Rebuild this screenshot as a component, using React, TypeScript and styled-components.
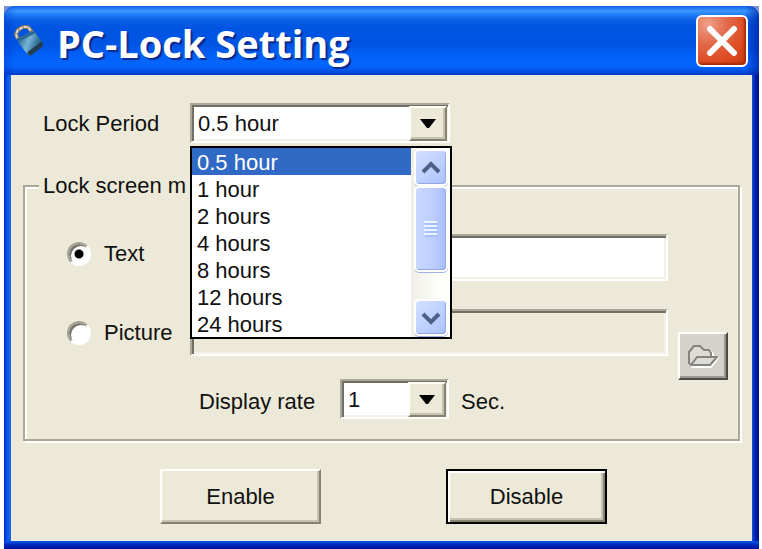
import React, { useState } from 'react';
import styled, { createGlobalStyle, css } from 'styled-components';

const face = '#ece9d8';
const shade = '#aca899';
const dark = '#716f64';

const GlobalStyle = createGlobalStyle`
  * { box-sizing: border-box; }
  body {
    margin: 0;
    background: #fff;
    color: #111;
    font: 22px/27px "Liberation Sans", Arial, sans-serif;
  }
  button, input, select { font: inherit; color: inherit; }
`;

const Page = styled.main`
  min-height: 100vh;
  padding: 6px 3px 0 4px;
  display: flex;
`;

const Frame = styled.div`
  flex: 1;
  display: flex;
  background: #7d8fd6;
`;

const Window = styled.section`
  flex: 1;
  display: flex;
  flex-direction: column;
  border-radius: 11px 11px 0 0;
  overflow: hidden;
  padding: 0 7px 8px;
  background:
    linear-gradient(#0a56ea, #0028b8 50%, #00129a) bottom / 100% 8px no-repeat,
    linear-gradient(90deg, #0028c8, #0855e6 40%, #1466f0) left / 7px 100% no-repeat,
    linear-gradient(90deg, #1a55dd, #0020a8 45%, #00128c) right / 7px 100% no-repeat;
`;

const TitleBar = styled.header`
  height: 69px;
  margin: 0 -7px;
  padding: 0 11px 0 10px;
  display: flex;
  align-items: center;
  gap: 12px;
  background:
    linear-gradient(90deg, #0030c060, #0030c000 12px, #0030c000 calc(100% - 14px), #0020a0b0),
    linear-gradient(#0c5fe6, #3d97ff 5px, #2482fa 8px, #0a5fe6 14px, #0054e2 22px, #0054e3 38px,
      #0263fb 52px, #0566ff 59px, #045cf0 63px, #0140ce 68px, #0140ce);
`;

const Title = styled.h1`
  flex: 1;
  margin: 0;
  padding-top: 4px;
  color: #fff;
  font: bold 38px/50px "Open Sans", "Noto Sans", sans-serif;
  text-shadow: 2px 2px 1px #0a2a8c;
`;

const CloseButton = styled.button`
  width: 52px;
  height: 52px;
  padding: 0;
  display: grid;
  place-items: center;
  border: 2px solid #fff;
  border-radius: 6px;
  background: radial-gradient(circle at 20% 15%, #f0a08a, #e2694a 35%, #dd4a20 70%, #c23a12);
  box-shadow: inset -2px -2px 2px #a82c0a;
`;

const Body = styled.form`
  flex: 1;
  padding: 28px 12px 17px;
  display: flex;
  flex-direction: column;
  background: ${face};
`;

const PeriodRow = styled.div`
  display: grid;
  grid-template-columns: 147px 260px;
  padding-left: 20px;
  align-items: center;
`;

const sunken = css`
  border: 2px solid;
  border-color: ${shade} #fff #fff ${shade};
  box-shadow: inset 2px 2px 0 ${dark}, inset -2px -2px 0 #f4f2e8;
`;

const raised = css`
  border: 2px solid;
  border-color: #fffef8 #85836f #85836f #fffef8;
  box-shadow: inset -2px -2px 0 #c5c2b2;
`;

const ComboBox = styled.div<{ $width: number }>`
  position: relative;
  width: ${(p) => p.$width}px;
  height: 40px;
`;

const Select = styled.select`
  appearance: none;
  ${sunken}
  width: 100%;
  height: 100%;
  padding: 0 44px 0 6px;
  border-radius: 0;
  background: #fff;
  outline: none;
`;

const DropArrow = styled.span`
  position: absolute;
  top: 3px;
  right: 3px;
  bottom: 2px;
  width: 38px;
  display: grid;
  place-items: center;
  ${raised}
  background: ${face};
  pointer-events: none;
`;

const Popup = styled.div`
  position: absolute;
  z-index: 2;
  top: 43px;
  left: 0;
  width: 262px;
  display: flex;
  border: 2px solid #000;
  background: #fff;
`;

const Options = styled.ul`
  flex: 1;
  margin: 0;
  padding: 0;
  list-style: none;
`;

const Option = styled.li<{ $active: boolean }>`
  height: 27px;
  padding: 1px 0 0 5px;
  color: ${(p) => (p.$active ? '#fff' : '#111')};
  background: ${(p) => (p.$active ? '#316ac5' : '#fff')};
`;

const ScrollBar = styled.div`
  width: 39px;
  padding: 1px 2px 1px 3px;
  display: flex;
  flex-direction: column;
  background: linear-gradient(90deg, #efede5, #fefefb 70%);
`;

const ScrollPart = styled.button`
  height: 37px;
  padding: 0;
  display: grid;
  place-items: center;
  border: 2px solid #fff;
  border-radius: 5px;
  background: linear-gradient(135deg, #d2dfff, #bccfff 60%, #a9c0f8);
  box-shadow: inset -1px -1px 1px #8fa8e4, 0 1px 0 #9db4e6;
`;

const Thumb = styled(ScrollPart)`
  height: 86px;
  background: linear-gradient(90deg, #cbd9ff, #bccdff 60%, #a8bdf8);
`;

const Track = styled.div`
  flex: 1;
`;

const Group = styled.fieldset`
  min-width: 0;
  margin: 29px 0 0;
  padding: 35px 10px 20px 42px;
  display: grid;
  grid-template-columns: 1fr 50px;
  column-gap: 10px;
  border: 2px solid ${shade};
  box-shadow: 2px 2px 0 #fff, inset 2px 2px 0 #fff;
`;

const Legend = styled.legend`
  margin-left: -28px;
  padding: 1px 5px 0 4px;
  line-height: 26px;
  background: ${face};
`;

const Rows = styled.div`
  display: grid;
  grid-template-columns: 123px 1fr;
  row-gap: 28px;
`;

const Choice = styled.label<{ $raised?: boolean }>`
  height: ${(p) => (p.$raised ? 39 : 47)}px;
  display: flex;
  align-items: center;
  gap: 13px;
`;

const Radio = styled.input`
  appearance: none;
  width: 24px;
  height: 24px;
  margin: 0;
  border: 2px solid;
  border-color: #a5a294 #fff #fff #a5a294;
  border-radius: 50%;
  background: #fff;
  box-shadow: inset 2px 2px 0 #77756a;
  &:checked {
    background: radial-gradient(circle, #000 4px, #fff 5px);
  }
`;

const TextField = styled.input`
  ${sunken}
  width: 100%;
  height: 47px;
  padding: 0 8px;
  background: #fff;
  outline: none;
  &:disabled { background: ${face}; }
`;

const RateRow = styled.div`
  grid-column: 2;
  margin-top: -5px;
  padding-left: 9px;
  display: flex;
  align-items: center;
`;

const RateLabel = styled.label`
  width: 141px;
  padding-top: 4px;
  white-space: nowrap;
`;

const Unit = styled.span`
  padding: 4px 0 0 12px;
`;

const BrowseColumn = styled.div`
  padding-top: 98px;
`;

const BrowseButton = styled.button`
  width: 50px;
  height: 48px;
  padding: 0;
  display: grid;
  place-items: center;
  border: 2px solid;
  border-color: #fffef8 #4d4b46 #4d4b46 #fffef8;
  background: #d4d2cb;
  box-shadow: inset -2px -2px 0 #9b9993;
`;

const Actions = styled.div`
  display: flex;
  justify-content: center;
  gap: 125px;
  padding: 28px 0 0 4px;
`;

const ActionButton = styled.button<{ $primary?: boolean }>`
  width: 161px;
  height: 55px;
  padding: 0;
  ${raised}
  background: ${face};
  ${(p) =>
    p.$primary &&
    css`
      border-color: #000;
      box-shadow: inset 2px 2px 0 #fff, inset -2px -2px 0 #85836f, inset -4px -4px 0 #c5c2b2;
    `}
`;

const LockIcon = () => (
  <svg width="31" height="34" viewBox="0 0 31 34" aria-hidden="true">
    <defs>
      <linearGradient id="lock" x1="0" y1="0.3" x2="1" y2="0.7">
        <stop offset="0" stopColor="#24648c" />
        <stop offset="0.4" stopColor="#78b4d6" />
        <stop offset="0.65" stopColor="#3f80a8" />
        <stop offset="1" stopColor="#15415f" />
      </linearGradient>
    </defs>
    <path d="M4 15 2 10 4 6 9 3 14 3 18 8" fill="none" stroke="#7d7465" strokeWidth="4" />
    <path d="M3 14 2 10 4 6 9 3 14 3 17 7" fill="none" stroke="#ddd8ca" strokeWidth="2" strokeDasharray="4 1" />
    <path d="M4 14 20 7 29 19 28 23 16 32 13 30 4 18Z" fill="url(#lock)" />
    <path d="M4 14 20 7 22 9 6 17Z" fill="#2b6a92" />
    <path d="m13 29 3 3 12-9 1-4-2-1-12 9Z" fill="#223c50" />
  </svg>
);

const ArrowIcon = () => (
  <svg width="16" height="9" viewBox="0 0 16 9" aria-hidden="true">
    <path d="M0 0h16L9 9H7Z" fill="#000" />
  </svg>
);

const Chevron = ({ down = false }: { down?: boolean }) => (
  <svg width="20" height="14" viewBox="0 0 20 14" aria-hidden="true">
    <path d={down ? 'M2 3l8 8 8-8' : 'M2 11l8-8 8 8'} fill="none" stroke="#4d6185" strokeWidth="4" />
  </svg>
);

const GripIcon = () => (
  <svg width="15" height="17" viewBox="0 0 15 17" aria-hidden="true">
    <path d="M0 1h13M0 5h13M0 9h13M0 13h13" stroke="#eef4ff" strokeWidth="2" />
    <path d="M1 3h13M1 7h13M1 11h13M1 15h13" stroke="#8cb0f8" strokeWidth="1" />
  </svg>
);

const FolderIcon = () => (
  <svg width="32" height="24" viewBox="0 0 32 24" fill="none" strokeLinejoin="round" aria-hidden="true">
    <path d="M5 22 2 19V8l5-6h6l4 4h5l3 3v4h5l-7 9Z" stroke="#fff" strokeWidth="2" transform="translate(1 1)" />
    <path d="M4 21 2 19V8l5-6h6l4 4h5l2 3v4M4 21l6-8h20l-7 8Z" fill="#dddcd7" stroke="#85837d" strokeWidth="2" />
  </svg>
);

const periods = ['0.5 hour', '1 hour', '2 hours', '4 hours', '8 hours', '12 hours', '24 hours'];

export default function App() {
  const [period, setPeriod] = useState(periods[0]);
  const [mode, setMode] = useState('text');

  return (
    <>
      <GlobalStyle />
      <Page>
        <Frame>
          <Window aria-labelledby="title">
            <TitleBar>
              <LockIcon />
              <Title id="title">PC-Lock Setting</Title>
              <CloseButton type="button" aria-label="Close">
                <svg width="32" height="32" viewBox="0 0 32 32" aria-hidden="true">
                  <path d="M4 4l24 24M28 4 4 28" stroke="#fff" strokeWidth="6" strokeLinecap="round" />
                </svg>
              </CloseButton>
            </TitleBar>
            <Body onSubmit={(e) => e.preventDefault()}>
              <PeriodRow>
                <label htmlFor="period">Lock Period</label>
                <ComboBox $width={260}>
                  <Select id="period" value={period} onChange={(e) => setPeriod(e.target.value)}>
                    {periods.map((p) => (
                      <option key={p}>{p}</option>
                    ))}
                  </Select>
                  <DropArrow><ArrowIcon /></DropArrow>
                  <Popup>
                    <Options role="listbox" aria-label="Lock Period">
                      {periods.map((p) => (
                        <Option
                          key={p}
                          role="option"
                          aria-selected={p === period}
                          $active={p === period}
                          onClick={() => setPeriod(p)}
                        >
                          {p}
                        </Option>
                      ))}
                    </Options>
                    <ScrollBar>
                      <ScrollPart type="button" aria-label="Scroll up"><Chevron /></ScrollPart>
                      <Thumb type="button" aria-label="Scroll position"><GripIcon /></Thumb>
                      <Track />
                      <ScrollPart type="button" aria-label="Scroll down"><Chevron down /></ScrollPart>
                    </ScrollBar>
                  </Popup>
                </ComboBox>
              </PeriodRow>
              <Group>
                <Legend>Lock screen m</Legend>
                <Rows>
                  <Choice $raised>
                    <Radio type="radio" name="mode" checked={mode === 'text'} onChange={() => setMode('text')} />
                    Text
                  </Choice>
                  <TextField type="text" aria-label="Text" />
                  <Choice>
                    <Radio type="radio" name="mode" checked={mode === 'picture'} onChange={() => setMode('picture')} />
                    Picture
                  </Choice>
                  <TextField type="text" aria-label="Picture" disabled={mode !== 'picture'} />
                  <RateRow>
                    <RateLabel htmlFor="rate">Display rate</RateLabel>
                    <ComboBox $width={109}>
                      <Select id="rate" defaultValue="1">
                        <option>1</option>
                      </Select>
                      <DropArrow><ArrowIcon /></DropArrow>
                    </ComboBox>
                    <Unit>Sec.</Unit>
                  </RateRow>
                </Rows>
                <BrowseColumn>
                  <BrowseButton type="button" aria-label="Browse"><FolderIcon /></BrowseButton>
                </BrowseColumn>
              </Group>
              <Actions>
                <ActionButton type="button">Enable</ActionButton>
                <ActionButton type="submit" $primary>Disable</ActionButton>
              </Actions>
            </Body>
          </Window>
        </Frame>
      </Page>
    </>
  );
}
